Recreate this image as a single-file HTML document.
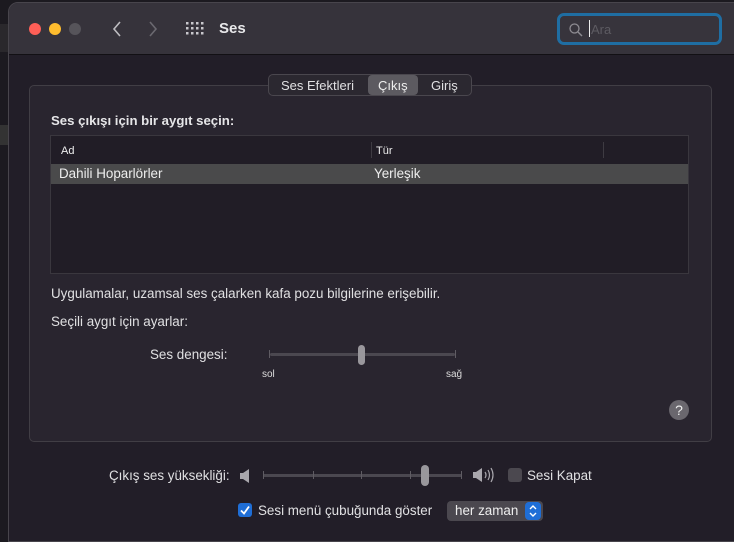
<!DOCTYPE html>
<html><head><meta charset="utf-8"><style>
*{margin:0;padding:0;box-sizing:border-box}
body{width:734px;height:533px;background:#1c1a20;font-family:"Liberation Sans",sans-serif;font-size:13.4px;color:#dcdcdc;position:relative;overflow:hidden}
.a{position:absolute}
.win{left:8px;top:2px;width:740px;height:540px;background:#221e28;border:1px solid #48454c;border-radius:10px 10px 0 0;overflow:hidden}
.tb{left:0;top:0;width:100%;height:52px;background:#36333b;border-bottom:1px solid #121014}
.dot{width:12px;height:12px;border-radius:50%;top:20px}
</style></head><body>
<div class="a" style="left:0;top:24px;width:8px;height:28px;background:#2a282c"></div>
<div class="a" style="left:0;top:125px;width:8px;height:20px;background:#333"></div>
<div class="win a">
 <div class="tb a">
  <div class="a dot" style="left:20px;background:#fe5f57"></div>
  <div class="a dot" style="left:40px;background:#febc2e"></div>
  <div class="a dot" style="left:60px;background:#56545a"></div>
  <svg class="a" style="left:102px;top:17px" width="12" height="18"><path d="M9 2 L3 9 L9 16" stroke="#bdbcc0" stroke-width="1.6" fill="none"/></svg>
  <svg class="a" style="left:138px;top:17px" width="12" height="18"><path d="M3 2 L9 9 L3 16" stroke="#6b6970" stroke-width="1.6" fill="none"/></svg>
  <svg class="a" style="left:177px;top:19px" width="18" height="15" fill="#c8c7cc">
   <rect x="0" y="0" width="2.5" height="2.5"/><rect x="5" y="0" width="2.5" height="2.5"/><rect x="10" y="0" width="2.5" height="2.5"/><rect x="15" y="0" width="2.5" height="2.5"/>
   <rect x="0" y="5" width="2.5" height="2.5"/><rect x="5" y="5" width="2.5" height="2.5"/><rect x="10" y="5" width="2.5" height="2.5"/><rect x="15" y="5" width="2.5" height="2.5"/>
   <rect x="0" y="10" width="2.5" height="2.5"/><rect x="5" y="10" width="2.5" height="2.5"/><rect x="10" y="10" width="2.5" height="2.5"/><rect x="15" y="10" width="2.5" height="2.5"/></svg>
  <div class="a" style="left:210px;top:17px;font-size:15px;font-weight:bold;color:#e8e8ea">Ses</div>
  <div class="a" style="left:548px;top:10px;width:165px;height:32px;border:3px solid #1f6ea3;border-radius:7px;background:#37343c"></div>
  <svg class="a" style="left:560px;top:20px" width="14" height="14"><circle cx="5.5" cy="5.5" r="4.5" stroke="#8e8c92" stroke-width="1.3" fill="none"/><path d="M9 9 L13 13" stroke="#8e8c92" stroke-width="1.4"/></svg>
  <div class="a" style="left:580px;top:17px;width:1px;height:17px;background:#eee"></div>
  <div class="a" style="left:582px;top:19px;color:#5d5b62;font-size:13px">Ara</div>
 </div>
</div>
<div class="a" style="left:29px;top:85px;width:683px;height:357px;background:#29252f;border:1px solid #413e45;border-radius:5px"></div>
<div class="a" style="left:268px;top:74px;width:204px;height:22px;background:#2b2830;border:1px solid #4a474e;border-radius:5px"></div>
<div class="a" style="left:368px;top:75px;width:50px;height:20px;background:#5c5a60;border-radius:4px"></div>
<div class="a" style="left:281px;top:78px;color:#e0e0e2;font-size:13px">Ses Efektleri</div>
<div class="a" style="left:378px;top:78px;color:#eee;font-size:13px">Çıkış</div>
<div class="a" style="left:431px;top:78px;color:#e0e0e2;font-size:13px">Giriş</div>
<div class="a" style="left:51px;top:113px;font-weight:bold;color:#e6e6e8;font-size:13.2px">Ses çıkışı için bir aygıt seçin:</div>
<div class="a" style="left:50px;top:135px;width:639px;height:139px;background:#211d26;border:1px solid #3a373e"></div>
<div class="a" style="left:61px;top:145px;font-size:11px;color:#eee">Ad</div>
<div class="a" style="left:371px;top:142px;width:1px;height:16px;background:#3e3b42"></div>
<div class="a" style="left:376px;top:145px;font-size:11px;color:#eee">Tür</div>
<div class="a" style="left:603px;top:142px;width:1px;height:16px;background:#3e3b42"></div>
<div class="a" style="left:51px;top:164px;width:637px;height:20px;background:#4a4a4b"></div>
<div class="a" style="left:59px;top:166px;color:#eee">Dahili Hoparlörler</div>
<div class="a" style="left:374px;top:166px;color:#eee">Yerleşik</div>
<div class="a" style="left:51px;top:286px;color:#e0e0e2">Uygulamalar, uzamsal ses çalarken kafa pozu bilgilerine erişebilir.</div>
<div class="a" style="left:51px;top:314px;color:#e0e0e2">Seçili aygıt için ayarlar:</div>
<div class="a" style="left:150px;top:347px;color:#e0e0e2">Ses dengesi:</div>
<div class="a" style="left:270px;top:353px;width:185px;height:3px;background:#4b4850;border-radius:2px"></div>
<div class="a" style="left:269px;top:350px;width:1px;height:8px;background:#5f5c63"></div>
<div class="a" style="left:455px;top:350px;width:1px;height:8px;background:#5f5c63"></div>
<div class="a" style="left:358px;top:345px;width:7px;height:20px;background:#99979c;border-radius:4px"></div>
<div class="a" style="left:262px;top:369px;font-size:10px;color:#ddd">sol</div>
<div class="a" style="left:446px;top:369px;font-size:10px;color:#ddd">sağ</div>
<div class="a" style="left:669px;top:400px;width:20px;height:20px;border-radius:50%;background:#6a676e;color:#eee;text-align:center;line-height:20px;font-size:14px">?</div>
<div class="a" style="left:109px;top:468px;color:#e0e0e2">Çıkış ses yüksekliği:</div>
<svg class="a" style="left:239px;top:468px" width="12" height="16"><path d="M1 5 H4 L10 1 V15 L4 11 H1Z" fill="#a9a7ad"/></svg>
<div class="a" style="left:263px;top:474px;width:198px;height:3px;background:#4b4850"></div>
<div class="a" style="left:263px;top:471px;width:1px;height:8px;background:#5f5c63"></div>
<div class="a" style="left:313px;top:471px;width:1px;height:8px;background:#5f5c63"></div>
<div class="a" style="left:361px;top:471px;width:1px;height:8px;background:#5f5c63"></div>
<div class="a" style="left:410px;top:471px;width:1px;height:8px;background:#5f5c63"></div>
<div class="a" style="left:461px;top:471px;width:1px;height:8px;background:#5f5c63"></div>
<div class="a" style="left:421px;top:465px;width:8px;height:21px;background:#99979c;border-radius:4px"></div>
<svg class="a" style="left:472px;top:466px" width="24" height="18"><path d="M1 6 H4 L10 2 V16 L4 12 H1Z" fill="#a9a7ad"/><path d="M13 6 Q15 9 13 12 M16 4 Q19 9 16 14 M19 2 Q23 9 19 16" stroke="#a9a7ad" stroke-width="1.2" fill="none"/></svg>
<div class="a" style="left:508px;top:468px;width:14px;height:14px;border-radius:3px;background:#4b484f"></div>
<div class="a" style="left:527px;top:468px;color:#e0e0e2">Sesi Kapat</div>
<div class="a" style="left:238px;top:503px;width:14px;height:14px;border-radius:3px;background:#1f6ed6"></div>
<svg class="a" style="left:238px;top:503px" width="14" height="14"><path d="M3 7.5 L6 10.5 L11 3.5" stroke="#fff" stroke-width="1.8" fill="none"/></svg>
<div class="a" style="left:258px;top:503px;color:#e0e0e2">Sesi menü çubuğunda göster</div>
<div class="a" style="left:447px;top:501px;width:96px;height:20px;background:#4b484f;border-radius:4px"></div>
<div class="a" style="left:455px;top:503px;color:#eee">her zaman</div>
<div class="a" style="left:525px;top:502px;width:16px;height:18px;background:#1f6ed6;border-radius:4px"></div>
<svg class="a" style="left:525px;top:502px" width="16" height="18"><path d="M5 7 L8 4 L11 7 M5 11 L8 14 L11 11" stroke="#fff" stroke-width="1.4" fill="none"/></svg>
</body></html>
